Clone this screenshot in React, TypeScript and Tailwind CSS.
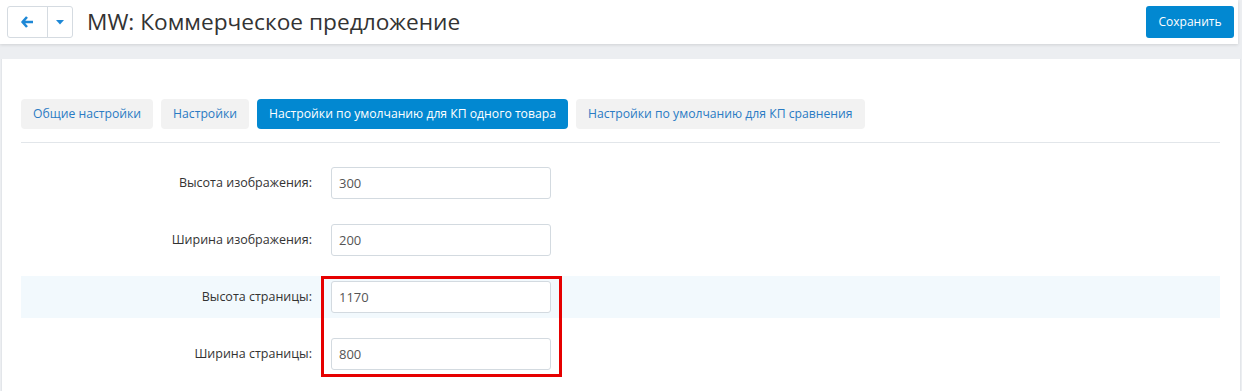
import { useState } from 'react';

const tabs = [
  'Общие настройки',
  'Настройки',
  'Настройки по умолчанию для КП одного товара',
  'Настройки по умолчанию для КП сравнения',
];

const fields = [
  { label: 'Высота изображения:', value: '300' },
  { label: 'Ширина изображения:', value: '200' },
  { label: 'Высота страницы:', value: '1170', hl: true },
  { label: 'Ширина страницы:', value: '800' },
];

export default function App() {
  const [active, setActive] = useState(2);
  const [values, setValues] = useState(fields.map((f) => f.value));

  return (
    <div className="h-[391px] overflow-hidden bg-[#eceef1] font-['Open_Sans',sans-serif] text-[#333]">
      {/* Top bar */}
      <div className="mr-[4px] flex h-[44px] items-center bg-white pl-[7px] pr-[4px] shadow-[0_1px_3px_rgba(0,0,0,0.12)]">
        <div className="flex h-[32px] rounded-[3px] border border-[#d5dbe1]">
          <button className="flex w-[40px] items-center justify-center border-r border-[#d5dbe1]">
            <svg width="13" height="12" viewBox="0 0 13 12">
              <path d="M6 1 L1.5 6 L6 11 M2 6 H12" stroke="#1e88d6" strokeWidth="2.6" fill="none" strokeLinejoin="round" />
            </svg>
          </button>
          <button className="flex w-[24px] items-center justify-center">
            <svg width="8" height="5" viewBox="0 0 8 5">
              <path d="M0 0 H8 L4 4.5 Z" fill="#1e88d6" />
            </svg>
          </button>
        </div>
        <h1 className="ml-[14px] text-[22.7px] leading-none text-[#333]">MW: Коммерческое предложение</h1>
        <button className="ml-auto h-[32px] w-[88px] rounded-[3px] bg-[#0288d1] text-[12px] text-white">
          Сохранить
        </button>
      </div>

      {/* Content panel */}
      <div className="relative mt-[15px] ml-[1px] mr-[1px] h-[400px] border-x border-[#e3e6ea] bg-white px-[19px] pt-[40px]">
        <div className="flex gap-[8px]">
          {tabs.map((t, i) => (
            <button
              key={t}
              onClick={() => setActive(i)}
              className={`h-[30px] rounded-[4px] px-[12px] text-[12.2px] ${
                i === active ? 'bg-[#0288d1] text-white' : 'bg-[#f2f2f2] text-[#2a7bc4]'
              }`}
            >
              {t}
            </button>
          ))}
        </div>
        <div className="mt-[13px] h-px w-[1199px] bg-[#e2e6ea]" />

        <div className="mt-[19px] w-[1199px]">
          {fields.map((f, i) => (
            <div
              key={f.label}
              className={`mb-[15px] flex h-[42px] items-center ${f.hl ? 'bg-[#f2f9fd]' : ''}`}
            >
              <label className="w-[291px] text-right text-[12.5px] text-[#333]">{f.label}</label>
              <input
                value={values[i]}
                onChange={(e) => setValues(values.map((v, j) => (j === i ? e.target.value : v)))}
                className="ml-[19px] h-[32px] w-[220px] rounded-[3px] border border-[#d3dae0] bg-white px-[7px] text-[13px] text-[#555] outline-none"
              />
            </div>
          ))}
        </div>

        {/* annotation box */}
        <div className="absolute left-[319px] top-[217px] h-[101px] w-[241px] border-[3px] border-[#e60000]" />
      </div>
    </div>
  );
}
